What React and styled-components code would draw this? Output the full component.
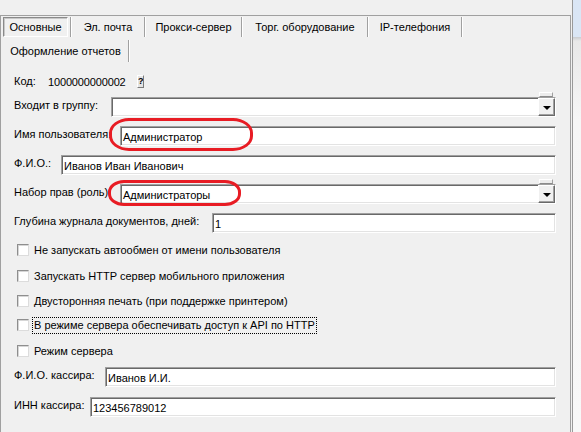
import React from "react";
import styled, { createGlobalStyle } from "styled-components";

const GlobalStyle = createGlobalStyle`
  html, body {
    margin: 0;
    padding: 0;
    background: #f0f0f0;
  }
  body {
    font-family: "Liberation Sans", Arial, sans-serif;
    font-size: 11px;
    color: #000;
  }
`;

const Window = styled.div`
  display: flex;
  width: 581px;
  height: 432px;
  overflow: hidden;
  background: #f0f0f0;
`;

const Main = styled.div`
  width: 571px;
  padding-top: 15px;
  display: flex;
  flex-direction: column;
`;

const Panel = styled.div`
  flex: 1;
  border: 1px solid #a0a0a0;
  border-bottom: none;
  display: flex;
  flex-direction: column;
`;

const Spacer = styled.div`
  width: 1px;
`;

const Divider = styled.div`
  width: 1px;
  background: #9a9a9a;
`;

const Strip = styled.div`
  flex: 1;
  background: linear-gradient(
    to bottom,
    #dae6f5 0,
    #dae6f5 37px,
    #c9ccd0 37px,
    #e8e8e8 41px,
    #f6f6f6 120px,
    #f8f8f8 100%
  );
`;

/* ---------- tabs ---------- */

const TabStrip = styled.div`
  padding-left: 2px;
  display: flex;
  flex-direction: column;
`;

const TabRow = styled.div`
  display: flex;
  margin-top: ${(p) => p.$mt}px;
  height: ${(p) => p.$h}px;
`;

const Tab = styled.div`
  width: ${(p) => p.$w}px;
  flex: 0 0 auto;
  display: flex;
  align-items: stretch;
  border-right: 1px solid #a0a0a0;
  box-shadow: 1px 0 0 #ffffff;
  box-sizing: border-box;
  margin-right: 1px;
`;

const TabFace = styled.div`
  flex: 1;
  margin-right: ${(p) => (p.$active ? 2 : 0)}px;
  display: flex;
  align-items: center;
  justify-content: center;
  white-space: nowrap;
  padding-bottom: 1px;
  box-sizing: border-box;
  ${(p) =>
    p.$active &&
    `
    border: 1px solid;
    border-color: #8a8a8a #ffffff #ffffff #8a8a8a;
    box-shadow: inset 1px 1px 0 #c8c8c8;
    background: #f0f0f0;
  `}
`;

/* ---------- form ---------- */

const Form = styled.div`
  padding: 0 14px 0 13px;
  display: flex;
  flex-direction: column;
`;

const Row = styled.div`
  display: flex;
  align-items: center;
  height: ${(p) => p.$h || 20}px;
  margin-top: ${(p) => p.$mt}px;
`;

const Label = styled.div`
  flex: 0 0 ${(p) => p.$w}px;
  white-space: nowrap;
  overflow: hidden;
  padding-bottom: 4px;
  box-sizing: border-box;
`;

const CodeValue = styled.div`
  flex: 0 0 89px;
  padding-bottom: 3px;
  letter-spacing: -0.15px;
`;

const HelpButton = styled.div`
  width: 7px;
  height: 13px;
  box-sizing: border-box;
  margin-bottom: 3px;
  background: #e4e4e4;
  border: 1px solid;
  border-color: #ffffff #7a7a7a #7a7a7a #ffffff;
  font-size: 9px;
  font-weight: bold;
  line-height: 11px;
  text-align: center;
  overflow: hidden;
`;

const Field = styled.div`
  position: relative;
  flex: 1;
  align-self: stretch;
  display: flex;
  align-items: stretch;
  background: #ffffff;
  border: 1px solid;
  border-color: #a0a0a0 #ffffff #ffffff #a0a0a0;
  box-shadow: inset 1px 1px 0 #696969, inset -1px -1px 0 #e3e3e3;
  box-sizing: border-box;
`;

const FieldText = styled.div`
  flex: 1;
  display: flex;
  align-items: center;
  padding-left: 2px;
  padding-top: 1px;
  white-space: nowrap;
`;

const DropButton = styled.div`
  width: 17px;
  display: flex;
  align-items: center;
  justify-content: center;
  background: #f0f0f0;
  border: 1px solid;
  border-color: #ffffff #696969 #696969 #ffffff;
  box-shadow: inset -1px -1px 0 #a0a0a0;
  box-sizing: border-box;

  &::after {
    content: "";
    width: 0;
    height: 0;
    border-left: 4px solid transparent;
    border-right: 4px solid transparent;
    border-top: 4px solid #000;
    margin-top: 1px;
  }
`;

/* a raised edge peeking out above the drop-down button */
const DropTab = styled.div`
  position: absolute;
  top: -6px;
  right: 2px;
  width: 14px;
  height: 5px;
  box-sizing: border-box;
  background: #ececec;
  border: 1px solid;
  border-color: #ffffff #a0a0a0 #8a8a8a #ffffff;
`;

/* red marker drawn over the screenshot */
const Marker = styled.div`
  position: absolute;
  left: ${(p) => p.$l}px;
  top: ${(p) => p.$t}px;
  width: ${(p) => p.$w}px;
  height: ${(p) => p.$h}px;
  border: 3px solid #e81c24;
  border-radius: ${(p) => p.$r};
  box-sizing: border-box;
  pointer-events: none;
`;

const CheckRow = styled.div`
  display: flex;
  align-items: center;
  height: 20px;
  margin-top: ${(p) => p.$mt}px;
  padding-left: 3px;
`;

const CheckBox = styled.div`
  width: 12px;
  height: 12px;
  box-sizing: border-box;
  background: #ffffff;
  border: 1px solid;
  border-color: #8e8e8e #dcdcdc #dcdcdc #8e8e8e;
  box-shadow: inset 1px 1px 0 #d6d6d6;
  margin-right: 3px;
`;

const CheckText = styled.div`
  padding: 0 1px 1px 1px;
  line-height: 14px;
  border: 1px dotted ${(p) => (p.$focused ? "#000" : "transparent")};
  white-space: nowrap;
`;

const tabsTop = [
  { w: 68, text: "Основные", active: true },
  { w: 73, text: "Эл. почта" },
  { w: 96, text: "Прокси-сервер" },
  { w: 125, text: "Торг. оборудование" },
  { w: 93, text: "IP-телефония" },
];

const checks = [
  { mt: 7, text: "Не запускать автообмен от имени пользователя" },
  { mt: 6, text: "Запускать HTTP сервер мобильного приложения" },
  { mt: 5, text: "Двусторонняя печать (при поддержке принтером)" },
  { mt: 4, text: "В режиме сервера обеспечивать доступ к API по HTTP", focused: true },
  { mt: 6, text: "Режим сервера" },
];

export default function App() {
  return (
    <>
      <GlobalStyle />
      <Window>
        <Main>
          <Panel>
            <TabStrip>
              <TabRow $mt={1} $h={20}>
                {tabsTop.map((t) => (
                  <Tab key={t.text} $w={t.w}>
                    <TabFace $active={t.active}>{t.text}</TabFace>
                  </Tab>
                ))}
              </TabRow>
              <TabRow $mt={3} $h={22}>
                <Tab $w={126}>
                  <TabFace>Оформление отчетов</TabFace>
                </Tab>
              </TabRow>
            </TabStrip>

            <Form>
              <Row $mt={11}>
                <Label $w={34}>Код:</Label>
                <CodeValue>1000000000002</CodeValue>
                <HelpButton>?</HelpButton>
              </Row>

              <Row $mt={4}>
                <Label $w={97}>Входит в группу:</Label>
                <Field>
                  <DropTab />
                  <FieldText />
                  <DropButton />
                </Field>
              </Row>

              <Row $mt={9}>
                <Label $w={106}>Имя пользователя:</Label>
                <Field>
                  <FieldText>Администратор</FieldText>
                  <Marker $l={-12} $t={-9} $w={144} $h={33} $r="20px / 15px" />
                </Field>
              </Row>

              <Row $mt={9}>
                <Label $w={47}>Ф.И.О.:</Label>
                <Field>
                  <FieldText>Иванов Иван Иванович</FieldText>
                </Field>
              </Row>

              <Row $mt={9}>
                <Label $w={106}>Набор прав (роль):</Label>
                <Field>
                  <DropTab />
                  <FieldText>Администраторы</FieldText>
                  <DropButton />
                  <Marker $l={-13} $t={-5} $w={133} $h={26} $r="16px / 12px" />
                </Field>
              </Row>

              <Row $mt={9}>
                <Label $w={198}>Глубина журнала документов, дней:</Label>
                <Field>
                  <FieldText>1</FieldText>
                </Field>
              </Row>

              {checks.map((c) => (
                <CheckRow key={c.text} $mt={c.mt}>
                  <CheckBox />
                  <CheckText $focused={c.focused}>{c.text}</CheckText>
                </CheckRow>
              ))}

              <Row $mt={6}>
                <Label $w={91}>Ф.И.О. кассира:</Label>
                <Field>
                  <FieldText>Иванов И.И.</FieldText>
                </Field>
              </Row>

              <Row $mt={10}>
                <Label $w={76}>ИНН кассира:</Label>
                <Field>
                  <FieldText>123456789012</FieldText>
                </Field>
              </Row>
            </Form>
          </Panel>
        </Main>
        <Spacer />
        <Divider />
        <Strip />
      </Window>
    </>
  );
}
